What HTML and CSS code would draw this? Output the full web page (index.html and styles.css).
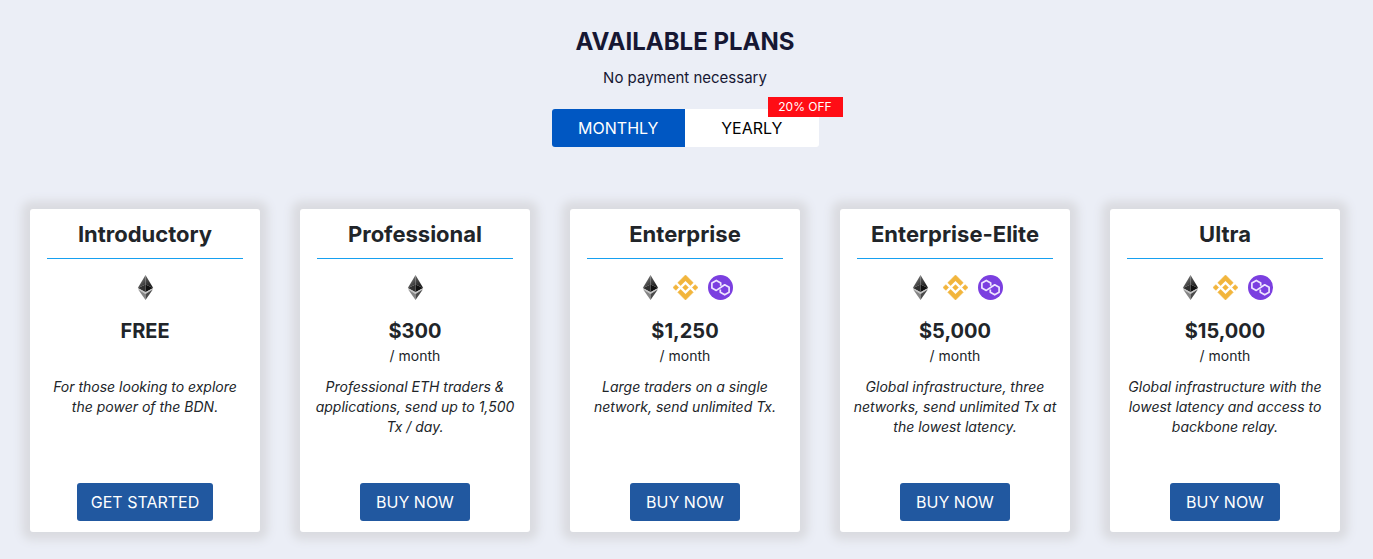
FILE: index.html
```html
<!DOCTYPE html>
<html lang="en">
<head>
<meta charset="utf-8">
<meta name="viewport" content="width=device-width, initial-scale=1">
<title>Available Plans</title>
<link rel="stylesheet" href="styles.css">
</head>
<body>
<svg class="defs" width="0" height="0" aria-hidden="true">
  <defs>
    <linearGradient id="eth-left" x1="0" y1="0" x2="0.6" y2="1"><stop offset="0" stop-color="#999"/><stop offset="1" stop-color="#333"/></linearGradient>
    <linearGradient id="eth-right" x1="0" y1="0" x2="0.4" y2="1"><stop offset="0" stop-color="#666"/><stop offset="1" stop-color="#1c1c1c"/></linearGradient>
    <symbol id="eth" viewBox="0 0 25 25">
      <path fill="url(#eth-left)" d="M12.500 0 4.800 12.900 12.500 9.400z"/>
      <path fill="url(#eth-right)" d="M12.500 0 20.200 12.900 12.500 9.400z"/>
      <path fill="#303030" d="M12.500 9.400 4.800 12.900 12.500 17.300z"/>
      <path fill="#101010" d="M12.500 9.400 20.200 12.900 12.500 17.300z"/>
      <path fill="#c4c4c4" d="M4.800 12.900 12.500 17.300 20.200 12.900 19.200 15 12.500 19 5.800 15z"/>
      <path fill="#858585" d="M5.200 14.600 12.500 18.900V25z"/>
      <path fill="#4a4a4a" d="M19.800 14.600 12.500 18.900V25z"/>
    </symbol>
    <symbol id="bnb" viewBox="0 0 126.610 126.610">
      <path fill="#f2b53c" stroke="#f2b53c" stroke-width="3" stroke-linejoin="round" d="M38.730 53.200 63.330 28.610 87.930 53.210 102.240 38.900 63.330 0 24.430 38.900zM0 63.310 14.300 49 28.610 63.310 14.300 77.620zM38.730 73.410 63.330 98 87.930 73.400 102.240 87.690 63.330 126.610 24.430 87.720zM98 63.310 112.300 49 126.610 63.310 112.300 77.620zM77.830 63.300 63.330 48.780 48.800 63.310 63.330 77.820z"/>
    </symbol>
    <symbol id="polygon" viewBox="0 0 25 25">
      <circle cx="12.500" cy="12.500" r="12.500" fill="#7b3fe0"/>
      <path fill="none" stroke="#efe6ff" stroke-width="1.700" stroke-linejoin="round" d="M12.700 10.800V7.900L8.300 5.400 3.900 7.900V12.900L8.300 15.400 16.700 9.800 21.100 12.300V17.300L16.700 19.800 12.300 17.300V14.400"/>
    </symbol>
  </defs>
</svg>
<main class="plans">
  <header class="intro">
    <h1 class="heading">AVAILABLE PLANS</h1>
    <p class="note">No payment necessary</p>
    <div class="toggle" role="group" aria-label="Billing period">
      <button class="period period-active" type="button" aria-pressed="true">MONTHLY</button>
      <button class="period" type="button" aria-pressed="false">YEARLY</button>
      <span class="badge">20% OFF</span>
    </div>
  </header>
  <section class="cards">
    <article class="card">
      <h2 class="name">Introductory</h2>
      <div class="chains"><svg class="chain" role="img" aria-label="Ethereum"><use href="#eth"/></svg></div>
      <div class="cost"><p class="price">FREE</p></div>
      <p class="summary">For those looking to explore the power of the BDN.</p>
      <button class="action" type="button">GET STARTED</button>
    </article>
    <article class="card">
      <h2 class="name">Professional</h2>
      <div class="chains"><svg class="chain" role="img" aria-label="Ethereum"><use href="#eth"/></svg></div>
      <div class="cost"><p class="price">$300</p><p class="term">/ month</p></div>
      <p class="summary">Professional ETH traders &amp; applications, send up to 1,500 Tx / day.</p>
      <button class="action" type="button">BUY NOW</button>
    </article>
    <article class="card">
      <h2 class="name">Enterprise</h2>
      <div class="chains"><svg class="chain" role="img" aria-label="Ethereum"><use href="#eth"/></svg><svg class="chain" role="img" aria-label="BNB Chain"><use href="#bnb"/></svg><svg class="chain" role="img" aria-label="Polygon"><use href="#polygon"/></svg></div>
      <div class="cost"><p class="price">$1,250</p><p class="term">/ month</p></div>
      <p class="summary">Large traders on a single network, send unlimited Tx.</p>
      <button class="action" type="button">BUY NOW</button>
    </article>
    <article class="card">
      <h2 class="name">Enterprise-Elite</h2>
      <div class="chains"><svg class="chain" role="img" aria-label="Ethereum"><use href="#eth"/></svg><svg class="chain" role="img" aria-label="BNB Chain"><use href="#bnb"/></svg><svg class="chain" role="img" aria-label="Polygon"><use href="#polygon"/></svg></div>
      <div class="cost"><p class="price">$5,000</p><p class="term">/ month</p></div>
      <p class="summary">Global infrastructure, three networks, send unlimited Tx at the lowest latency.</p>
      <button class="action" type="button">BUY NOW</button>
    </article>
    <article class="card">
      <h2 class="name">Ultra</h2>
      <div class="chains"><svg class="chain" role="img" aria-label="Ethereum"><use href="#eth"/></svg><svg class="chain" role="img" aria-label="BNB Chain"><use href="#bnb"/></svg><svg class="chain" role="img" aria-label="Polygon"><use href="#polygon"/></svg></div>
      <div class="cost"><p class="price">$15,000</p><p class="term">/ month</p></div>
      <p class="summary">Global infrastructure with the lowest latency and access to backbone relay.</p>
      <button class="action" type="button">BUY NOW</button>
    </article>
  </section>
</main>
</body>
</html>
```
FILE: styles.css
```css
* {
  box-sizing: border-box;
}

body,
h1,
h2,
p {
  margin: 0;
}

body {
  background: #ebeef6;
  color: #212529;
  font-family: Inter, "Open Sans", sans-serif;
}

button {
  border: 0;
  font: inherit;
  cursor: pointer;
}

.defs {
  position: absolute;
}

.plans {
  padding: 25px 33px 27px 30px;
}

.intro {
  display: flex;
  flex-direction: column;
  align-items: center;
  color: #161733;
}

.heading {
  font-size: 24px;
  line-height: 34px;
  font-weight: 700;
}

.note {
  margin-top: 9px;
  font-size: 15px;
  line-height: 20px;
}

.toggle {
  position: relative;
  display: grid;
  grid-template-columns: 1fr 1fr;
  width: 267px;
  margin-top: 21px;
}

.period {
  padding: 7px 12px;
  background: #fff;
  color: #000;
  font-size: 16px;
  line-height: 24px;
  border-radius: 0 3px 3px 0;
}

.period-active {
  background: #0057c2;
  color: #fff;
  border-radius: 3px 0 0 3px;
}

.badge {
  position: absolute;
  top: -12px;
  right: -24px;
  width: 75px;
  background: #ff0d15;
  color: #fff;
  font-size: 12px;
  line-height: 20px;
  text-align: center;
}

.cards {
  display: grid;
  grid-template-columns: repeat(5, 1fr);
  gap: 40px;
  margin-top: 62px;
}

.card {
  display: flex;
  flex-direction: column;
  align-items: center;
  padding: 9px 12px 11px;
  background: #fff;
  border-radius: 3px;
  box-shadow: 0 0 10px 8px #dadbe0;
  text-align: center;
}

.name {
  align-self: stretch;
  margin: 0 5px;
  padding-bottom: 7px;
  border-bottom: 1px solid #16a0f0;
  font-size: 22px;
  line-height: 33px;
  font-weight: 700;
  white-space: nowrap;
}

.chains {
  display: flex;
  gap: 10px;
  margin-top: 16px;
}

.chain {
  width: 25px;
  height: 25px;
}

.cost {
  min-height: 50px;
  margin-top: 16px;
}

.price {
  font-size: 20px;
  line-height: 30px;
  font-weight: 700;
}

.term {
  font-size: 14px;
  line-height: 20px;
}

.summary {
  min-height: 60px;
  margin: 11px 0 46px;
  font-size: 14px;
  line-height: 20px;
  font-style: italic;
}

.action {
  min-width: 110px;
  margin-top: auto;
  padding: 7px 14px;
  background: #2158a0;
  color: #fff;
  font-size: 16px;
  line-height: 24px;
  border-radius: 3px;
}
```
